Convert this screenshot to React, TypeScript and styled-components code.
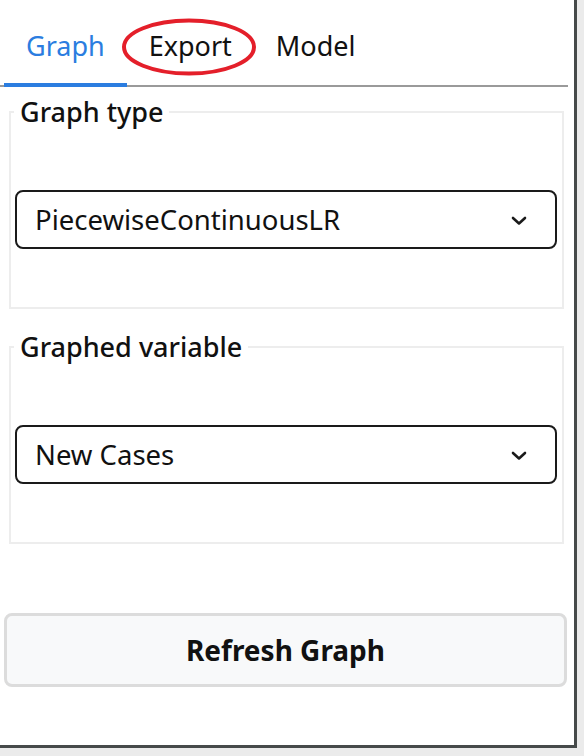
import React, { useState } from "react";
import styled, { createGlobalStyle } from "styled-components";

const GlobalStyle = createGlobalStyle`
  html, body {
    margin: 0;
    padding: 0;
    background: #ebebeb;
  }
  body {
    font-family: "Noto Sans", "Open Sans", sans-serif;
    color: #111;
  }
`;

const graphTypes = ["PiecewiseContinuousLR", "LinearRegression", "Exponential"];
const variables = ["New Cases", "Total Cases", "Deaths"];

const tabs = ["Graph", "Export", "Model"];

const Select: React.FC<{ value: string; options: string[]; onChange: (v: string) => void }> = ({
  value,
  options,
  onChange,
}) => (
  <SelectBox>
    <SelectInput value={value} onChange={(e) => onChange(e.target.value)}>
      {options.map((o) => (
        <option key={o} value={o}>
          {o}
        </option>
      ))}
    </SelectInput>
    <Chevron viewBox="0 0 16 10" aria-hidden>
      <polyline points="2,2 8,7.5 14,2" />
    </Chevron>
  </SelectBox>
);

const App: React.FC = () => {
  const [active, setActive] = useState("Graph");
  const [graphType, setGraphType] = useState(graphTypes[0]);
  const [variable, setVariable] = useState(variables[0]);

  return (
    <>
      <GlobalStyle />
      <Panel>
        <TabBar>
          {tabs.map((t) => (
            <Tab key={t} active={active === t} onClick={() => setActive(t)}>
              {t}
              {t === "Export" && (
                <Circled viewBox="0 0 136 58" aria-hidden>
                  <ellipse cx="68" cy="29" rx="65" ry="26.5" />
                </Circled>
              )}
            </Tab>
          ))}
        </TabBar>

        <Group>
          <Legend>Graph type</Legend>
          <Select value={graphType} options={graphTypes} onChange={setGraphType} />
        </Group>

        <Group second>
          <Legend>Graphed variable</Legend>
          <Select value={variable} options={variables} onChange={setVariable} />
        </Group>

        <RefreshButton>Refresh Graph</RefreshButton>
      </Panel>
    </>
  );
};

export default App;

const Panel = styled.div`
  width: 574px;
  height: 745px;
  background: #ffffff;
  border-right: 3px solid #464a4a;
  border-bottom: 3px solid #464a4a;
  display: flex;
  flex-direction: column;
`;

const TabBar = styled.div`
  display: flex;
  padding-left: 4px;
  margin-right: 6px;
  box-shadow: inset 0 -2px 0 #9a9a9a;
`;

const Tab = styled.div<{ active: boolean }>`
  position: relative;
  padding: 27px 22px 19px;
  font-size: 27px;
  line-height: 37px;
  color: ${(p) => (p.active ? "#2b7de0" : "#111")};
  border-bottom: 4px solid ${(p) => (p.active ? "#2b7de0" : "transparent")};
  cursor: pointer;
`;

const Circled = styled.svg`
  position: absolute;
  left: -6px;
  top: 18px;
  width: 136px;
  height: 58px;
  overflow: visible;
  pointer-events: none;

  ellipse {
    fill: none;
    stroke: #e41f2a;
    stroke-width: 4;
  }
`;

const Group = styled.fieldset<{ second?: boolean }>`
  margin: ${(p) => (p.second ? "23px" : "10px")} 10px 0 9px;
  padding: 0 5px 58px 4px;
  border: 2px solid #ededed;
  min-width: 0;
`;

const Legend = styled.legend`
  margin-left: -1px;
  padding: 0 6px;
  font-size: 27px;
  line-height: 30px;
  font-weight: 500;
  color: #111;
`;

const SelectBox = styled.div`
  position: relative;
  margin-top: 63px;
`;

const SelectInput = styled.select`
  appearance: none;
  width: 100%;
  height: 59px;
  box-sizing: border-box;
  padding: 0 50px 0 18px;
  border: 2px solid #1a1a1a;
  border-radius: 8px;
  background: #fff;
  font-family: "Noto Sans", "Open Sans", sans-serif;
  font-size: 27.5px;
  color: #111;
  outline: none;
`;

const Chevron = styled.svg`
  position: absolute;
  right: 30px;
  top: 50%;
  width: 16px;
  height: 10px;
  margin-top: -4px;
  pointer-events: none;

  polyline {
    fill: none;
    stroke: #1a1a1a;
    stroke-width: 2.6;
    stroke-linecap: round;
    stroke-linejoin: round;
  }
`;

const RefreshButton = styled.button`
  margin: 69px 7px 0 4px;
  height: 74px;
  border: 3px solid #dcdcdc;
  border-radius: 8px;
  background: #f8f9fa;
  font-family: "Noto Sans", "Open Sans", sans-serif;
  font-size: 28px;
  font-weight: 700;
  color: #111;
  cursor: pointer;
`;
